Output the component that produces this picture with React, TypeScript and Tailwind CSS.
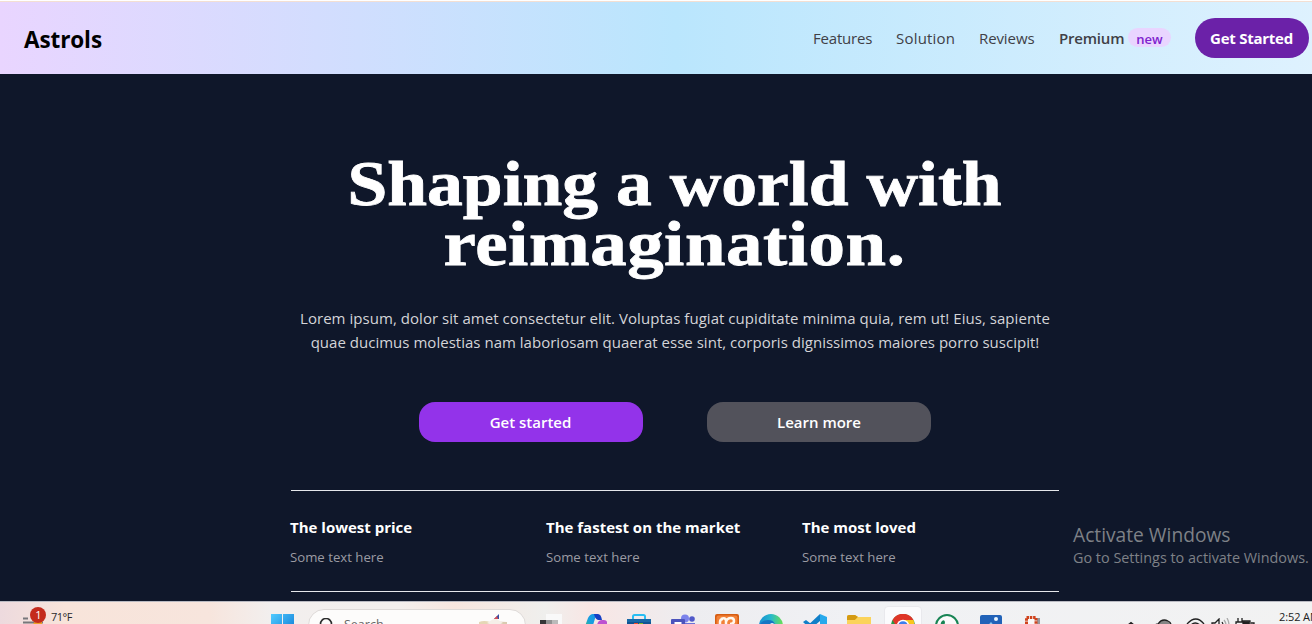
import React from "react";

const navLinks = [
  { label: "Features", style: "w-[59px] tracking-[-0.2px]" },
  { label: "Solution", style: "w-[59px] tracking-[0.2px]" },
  { label: "Reviews", style: "w-[56px] tracking-[-0.1px]" },
];

const perks = ["The lowest price", "The fastest on the market", "The most loved"];

function Header() {
  return (
    <header className="flex h-[73px] shrink-0 items-center border-t border-[#f3dfd3] bg-linear-to-r/srgb from-[#e9d5ff] via-[#bae6fd] to-[#e0f2fe] pb-px pl-6">
      <div className="w-[789px] pt-[5px] text-[22.5px] leading-8 font-bold tracking-[-0.1px] text-black">Astrols</div>
      <nav className="flex items-center gap-6 text-[15px] leading-6 whitespace-nowrap text-[#404046]">
        {navLinks.map((l) => (
          <a key={l.label} className={l.style}>{l.label}</a>
        ))}
        <a className="flex w-[112px] items-center font-semibold">
          <span className="w-[69px] tracking-[-0.2px]">Premium</span>
          <span className="flex h-[19px] w-[43px] items-center justify-center rounded-full bg-[#e9d5ff] pt-[2px] text-[13px] font-semibold text-[#7e22ce]">new</span>
        </a>
        <button className="h-10 w-[114px] rounded-full bg-[#6b21a8] pr-px text-[15px] font-bold tracking-[-0.25px] text-white">Get Started</button>
      </nav>
    </header>
  );
}

function Hero() {
  return (
    <main className="flex h-[527px] shrink-0 flex-col items-center bg-[#0f172a] pt-20 whitespace-nowrap">
      <h1 className="text-center font-['Liberation_Serif',serif] text-[64px] leading-[60px] font-bold text-white [-webkit-text-stroke:0.8px_white]">
        <span className="block scale-x-[1.118]">Shaping a world with</span>
        <span className="block scale-x-[1.138] tracking-[0.5px]">reimagination.</span>
      </h1>
      <p className="mt-8 text-center text-[15px] leading-6 text-[#d4d4d8]">
        <span className="block tracking-[0.045px]">Lorem ipsum, dolor sit amet consectetur elit. Voluptas fugiat cupiditate minima quia, rem ut! Eius, sapiente</span>
        <span className="block tracking-[0.02px]">quae ducimus molestias nam laboriosam quaerat esse sint, corporis dignissimos maiores porro suscipit!</span>
      </p>
      <div className="mt-12 flex gap-16 text-[15px] font-semibold text-white">
        <button className="h-10 w-56 rounded-2xl bg-[#9333ea] pr-px">Get started</button>
        <button className="h-10 w-56 rounded-2xl bg-[#52525b]">Learn more</button>
      </div>
      <section className="mt-12 grid h-[102px] w-[768px] grid-cols-3 border-y border-[#e5e7eb] pt-6">
        {perks.map((p) => (
          <div key={p} className="-ml-px">
            <h2 className="text-[15px] leading-6 font-bold text-white">{p}</h2>
            <p className="mt-2 text-[13.2px] leading-5 text-[#9b9ba3]">Some text here</p>
          </div>
        ))}
      </section>
    </main>
  );
}

function Cell({ children }: { children: React.ReactNode }) {
  return (
    <div className="flex h-[46px] w-11 shrink-0 justify-center pt-3">
      <svg width="24" height="24" viewBox="0 0 24 24">{children}</svg>
    </div>
  );
}

function Taskbar() {
  return (
    <footer className="flex h-12 shrink-0 border-t border-[#b9bac2] bg-[#f2f2f2]">
      <div className="flex h-12 w-[1312px] shrink-0 bg-[linear-gradient(90deg,#eddade_0px,#f8e4da_65px,#f7e5dd_210px,#f2efee_270px,#f3efed_400px,#f7e6df_455px,#efefed_545px,#f8e6e4_590px,#ededf0_690px,#f0f1f4_850px,#f2f2f2_1312px)]">
        <div className="flex w-[260px] shrink-0 pl-[22px]">
          <svg className="mt-1 shrink-0" width="26" height="24" viewBox="0 0 26 24">
            <path d="M1 12.5h5M1 16.5h20" stroke="#77777b" strokeWidth="2" />
            <path d="M11 18a6 6 0 0 1 9-2v6h-9z" fill="#eca22b" />
            <circle cx="16" cy="9" r="8" fill="#c42b1c" />
            <text x="13.3" y="13" fontSize="11" fill="white">1</text>
          </svg>
          <span className="mt-[7px] ml-[3px] text-[11px] leading-4 tracking-[-0.5px] text-[#29292b]">71°F</span>
        </div>
        <Cell>
          <defs>
            <linearGradient id="win" x1="0" x2="1" y1="0" y2="1"><stop stopColor="#51cbff" /><stop offset="1" stopColor="#0874d1" /></linearGradient>
          </defs>
          <path d="M1 0h11v11H1zM13 0h11v11H13zM1 12h11v11H1zM13 12h11v11H13z" fill="url(#win)" />
        </Cell>
        <div className="mt-[7px] mr-[3px] ml-1 flex h-8 w-[218px] shrink-0 rounded-full border border-[#dedad8] bg-[#fdfcfb] pl-[9px]">
          <svg className="mt-2 shrink-0" width="16" height="16" viewBox="0 0 16 16" fill="none" stroke="#2c2c2c" strokeWidth="1.6">
            <circle cx="8" cy="6" r="5.5" /><path d="m4 10-3 4" />
          </svg>
          <span className="mt-[6px] ml-[10px] w-[126px] shrink-0 text-[12.5px] leading-[18px] text-[#666]">Search</span>
          <svg className="mt-1 ml-[9px] shrink-0" width="28" height="24" viewBox="0 0 28 24">
            <path d="M0 8q5-2 11 0v14H0z" fill="#e5d7b6" /><path d="M11 9q8-2 17-1v14H11z" fill="#d9cbb0" />
            <path d="m8 9 8-5 8 5-8 3z" fill="#f5efe8" /><path d="m15 5 5-5v5z" fill="#394fa3" /><path d="m15 5 3-3 1 3z" fill="#d84b50" />
            <path d="M1 11h9M20 11h7" stroke="#b7a88a" />
          </svg>
        </div>
        <Cell>
          <path d="M7 0h16v16H7z" fill="#f9f9f9" /><path d="M1 6h12v14H1z" fill="#353537" /><path d="M7 6h12v12H7z" fill="#aaa" opacity=".8" />
        </Cell>
        <Cell>
          <defs><linearGradient id="cop" x1="0" x2="1" y1="1" y2="0"><stop stopColor="#45c94b" /><stop offset=".5" stopColor="#18a0df" /><stop offset="1" stopColor="#1a93e8" /></linearGradient></defs>
          <path d="M1 15 5 4q2-4 5-4h5q-3 3-4 8l-3 9H3z" fill="url(#cop)" />
          <path d="M11 0h4q3 0 4 6h-4q-3-1-4-6z" fill="#153fc4" />
          <path d="M14 11q1-5 5-5h2q4 0 3 5l-2 9h-8z" fill="#bd51d1" />
        </Cell>
        <Cell>
          <path d="M6 6V2.500Q6 1 7.500 1h9Q18 1 18 2.500V6" fill="none" stroke="#29bdf2" strokeWidth="2" />
          <path d="M0 5h24v17H0z" fill="#105493" /><path d="M0 5h24v3H0z" fill="#1868a7" />
          <path d="M7 9h4v4H7z" fill="#f04d2a" /><path d="M12 9h4v4h-4z" fill="#7cb82f" />
        </Cell>
        <Cell>
          <circle cx="14" cy="4.500" r="4" fill="#7b83eb" /><circle cx="21" cy="5" r="2.800" fill="#5059c9" />
          <path d="M10 9h14v11H10z" fill="#6972d8" /><rect y="5" width="14" height="15" rx="1" fill="#4b53bc" />
          <path d="M3.500 9h7M7 9v8" stroke="white" strokeWidth="2" />
        </Cell>
        <Cell>
          <rect width="24" height="24" rx="2" fill="#d65d12" /><rect x="1.500" y="1.500" width="21" height="21" rx="2" fill="#f28138" />
          <path d="M6 5q5-2 5 2v5M11 8q1-4 5-4 3 0 3 3t-4 3M5 12V8q0-3 3-3" stroke="#fff8ef" strokeWidth="2.500" fill="none" />
        </Cell>
        <Cell>
          <defs><linearGradient id="edge"><stop stopColor="#168ed4" /><stop offset=".5" stopColor="#28b9cb" /><stop offset="1" stopColor="#6ce052" /></linearGradient></defs>
          <circle cx="12" cy="12" r="12" fill="url(#edge)" /><path d="M0 14q1-8 9-8 7 0 7 6l-6 10Q2 22 0 14" fill="#1576c4" /><path d="M10 14q-1-4 3-5 5 1 3 6z" fill="#eff8fc" />
        </Cell>
        <Cell>
          <path d="m17 0 7 3v19l-7 2z" fill="#27a9ec" /><path d="M17 0v7L4 18l-3-3zM0 8l3-2 14 11v7z" fill="#107fc8" />
        </Cell>
        <Cell>
          <path d="M0 3q0-2 2-2h6l3 2h11q2 0 2 2v17H0z" fill="#f7c737" /><path d="M0 3q0-2 2-2h6l3 2-3 3H0z" fill="#d49a12" /><path d="M0 6h8l3-3h13v17H0z" fill="#fbd35b" />
        </Cell>
        <div className="mt-1 mr-[3px] ml-[3px] h-10 w-[38px] shrink-0 rounded border border-[#e9e9ed] bg-[#fbfbfd] pt-[7px] pl-[6px]">
          <svg width="24" height="24" viewBox="0 0 24 24">
            <circle cx="12" cy="12" r="12" fill="#279847" /><path d="M1.500 6A12 12 0 0 1 22.500 6H12L7 15z" fill="#df3528" />
            <path d="M12 6h10.500Q26 18 14 24l4-9z" fill="#fac61c" /><circle cx="12" cy="12" r="6.300" fill="white" /><circle cx="12" cy="12" r="4.800" fill="#3c7eed" />
          </svg>
        </div>
        <Cell>
          <circle cx="12" cy="12" r="11" fill="#fafafa" stroke="#188454" strokeWidth="2" /><path d="m1 23 2-7 4 5z" fill="#188454" />
          <path d="M7 7q3-2 3 2l-1 2q2 4 5 5l3-2q3 2 0 4-7 2-11-6-1-3 1-5" fill="#188454" />
        </Cell>
        <Cell>
          <rect x="1" y="1" width="22" height="23" rx="2" fill="#2162b8" /><circle cx="17" cy="5" r="2" fill="#e9f5ff" /><path d="M1 20 12 8l11 13v3H1z" fill="#86c7f1" />
        </Cell>
        <div className="w-11 shrink-0 pt-3 pl-3">
          <svg width="18" height="24" viewBox="0 0 18 24">
            <path d="M12 4h3v20h-3z" fill="#97999e" /><path d="M2 3h8v20H2z" fill="#f9f9f9" />
            <path d="M1.500 20V3.500H11V20" fill="none" stroke="#cf431d" strokeWidth="3" strokeDasharray="2.500 .8" />
          </svg>
        </div>
        <div className="flex shrink-0 pt-4 pl-[65px]">
          <svg className="shrink-0" width="148" height="20" viewBox="0 0 148 20" fill="none" stroke="#202020" strokeWidth="1.300">
            <path d="m4 9 5-4 5 4" strokeWidth="2" />
            <path d="M32 9q1-3 4-3 4-6 10-3 3 1 3 4 3 3-1 5H34q-4 0-2-3z" fill="#858585" />
            <path d="M65 6q9-10 17 0M68 8q5-6 11 0" /><circle cx="73.500" cy="10" r="2" />
            <path d="M90 5h3l4-4v14l-4-4h-3z" /><path d="M100 4q2 3 0 7" /><path d="M102 2q4 5 0 11M105 0q4 7 0 14" stroke="#aaa" />
            <path d="M120 3h8v8h-8M129 5h3v4" /><path d="M121 4h6v6h-6z" fill="#202020" /><path d="M116 0v4M120 0v4M114 4h8v3q-4 3-8 0zM118 7v5" />
          </svg>
          <span className="mt-[-9px] ml-[9px] w-[33px] shrink-0 text-[11px] leading-4 tracking-[-0.1px] whitespace-nowrap text-[#202020]">2:52 AM</span>
        </div>
      </div>
    </footer>
  );
}

export default function App() {
  return (
    <div className="relative h-[624px] w-full overflow-hidden bg-white pt-px font-['Open_Sans','Noto_Sans',sans-serif]">
      <div className="flex w-[1350px] flex-col">
        <Header />
        <Hero />
        <Taskbar />
      </div>
      <aside className="absolute top-[523px] left-[1073px] whitespace-nowrap text-[#7e8187]">
        <div className="text-[19.2px] leading-6">Activate Windows</div>
        <div className="text-[14.4px] leading-[22px]">Go to Settings to activate Windows.</div>
      </aside>
    </div>
  );
}
